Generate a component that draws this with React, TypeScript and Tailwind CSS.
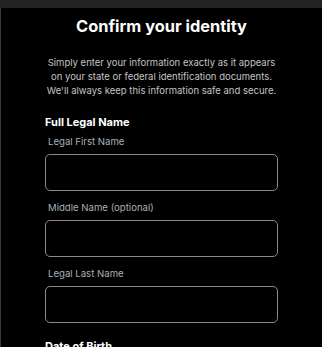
export default function App() {
  const fields = ["Legal First Name", "Middle Name (optional)", "Legal Last Name"];
  return (
    <div
      className="w-[322px] h-[347px] overflow-hidden bg-black flex flex-col"
      style={{ fontFamily: "Inter, 'Liberation Sans', sans-serif" }}
    >
      {/* Top bar */}
      <div className="h-[8px] bg-[#232323] shrink-0" />
      <div className="flex-1 min-h-0 border-l border-[#3a3a3a] flex flex-col items-center">
        <h1 className="mt-[6px] text-[16.4px] leading-[24px] font-bold text-white">
          Confirm your identity
        </h1>
        <p className="mt-[18px] w-[240px] text-center text-[9.5px] leading-[14px] text-[#c4c4c4]">
          Simply enter your information exactly as it appears on your state or federal identification documents.
          We'll always keep this information safe and secure.
        </p>
        <div className="mt-[17px] w-[233px] flex flex-col">
          <div className="text-[11px] leading-[14px] font-bold text-white">Full Legal Name</div>
          {fields.map((label, i) => (
            <div key={label} className={i === 0 ? "mt-[7px]" : "mt-[11px]"}>
              <div className="pl-[3px] text-[9.6px] leading-[12px] text-[#a9b0b8]">{label}</div>
              <div className="mt-[6px] h-[37px] rounded-[5px] border border-[#8a8a8a]" />
            </div>
          ))}
          <div className="mt-[16px] text-[11px] leading-[14px] font-bold text-white">Date of Birth</div>
        </div>
      </div>
    </div>
  );
}
